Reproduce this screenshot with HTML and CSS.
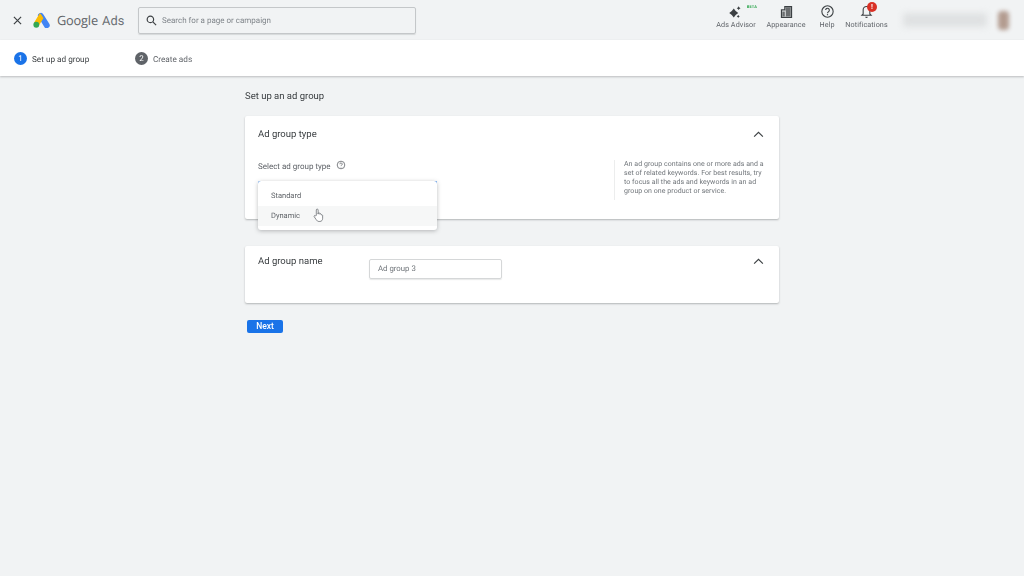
FILE: index.html
```html
<!DOCTYPE html>
<html lang="en">
<head>
<meta charset="utf-8">
<title>Google Ads</title>
<link rel="stylesheet" href="styles.css">
</head>
<body>
<div class="page">
<header class="topbar">
  <svg class="close" viewBox="0 0 10 10"><path d="M1 1l8 8M9 1l-8 8"/></svg>
  <svg class="logo" viewBox="0 0 20 18"><path d="M7 1.500a3.400 3.400 0 0 1 4.600 1.200l6.600 10.600a3.300 3.300 0 0 1-5.700 3.400L6 6a3.200 3.200 0 0 1 1-4.500z" fill="#4285f4"/><path d="M7.500 1.300L1 12l5.500 3.200L11.600 7 9.800 3.800C9.200 2.700 8.400 1.900 7.500 1.300z" fill="#fbbc04"/><circle cx="3.600" cy="14.300" r="3.300" fill="#34a853"/></svg>
  <div class="brand"><span class="brand-google">Google</span> <span class="brand-ads">Ads</span></div>
  <div class="search">
    <svg class="search-icon" viewBox="0 0 12 12"><circle cx="4.800" cy="4.800" r="3.500"/><path d="M7.500 7.500L11 11"/></svg>
    <span>Search for a page or campaign</span>
  </div>
  <nav class="tools">
    <div class="tool tool-advisor">
      <svg class="tool-icon" viewBox="0 0 24 18"><path d="M9 5l2.600 3.400L15 11l-3.400 2.600L9 17l-2.600-3.400L3 11l3.400-2.600z" fill="#3c4043"/><path d="M15.500 2l1 1.500 1.500 1-1.500 1-1 1.500-1-1.500-1.500-1 1.500-1z" fill="#3c4043"/><path d="M15 13.500l.8 1.200 1.200.8-1.200.8-.8 1.200-.8-1.200-1.200-.8 1.200-.8z" fill="#3c4043"/></svg>
      <span class="beta">BETA</span>
      <span>Ads Advisor</span>
    </div>
    <div class="tool tool-appearance">
      <svg class="tool-icon" viewBox="0 0 18 18"><path d="M3 7h4V3h8v13H3z" fill="none" stroke="#3c4043" stroke-width="1.500"/><path d="M8 4h6v11H8zM4 9h3v6H4z" fill="#3c4043" opacity=".75"/></svg>
      <span>Appearance</span>
    </div>
    <div class="tool tool-help">
      <svg class="tool-icon" viewBox="0 0 18 18"><circle cx="9" cy="9" r="6.800" fill="none" stroke="#3c4043" stroke-width="1.300"/><path d="M6.800 7.300a2.200 2.200 0 1 1 3.500 1.800c-.8.600-1.300 1-1.300 2" fill="none" stroke="#3c4043" stroke-width="1.300"/><circle cx="9" cy="12.800" r=".8" fill="#3c4043"/></svg>
      <span>Help</span>
    </div>
    <div class="tool tool-notify">
      <svg class="tool-icon" viewBox="0 0 18 18"><path d="M9 3a4 4 0 0 1 4 4v5l1.500 1.500h-11L5 12V7a4 4 0 0 1 4-4z" fill="none" stroke="#3c4043" stroke-width="1.300"/><path d="M7.500 15.300h3a1.500 1.500 0 0 1-3 0z" fill="#3c4043"/></svg>
      <span class="alert">!</span>
      <span>Notifications</span>
    </div>
  </nav>
  <div class="account">
    <div class="account-lines"></div>
    <div class="account-photo"></div>
  </div>
</header>

<div class="steps">
  <div class="step step-active"><span class="step-num">1</span><span class="step-text">Set up ad group</span></div>
  <div class="step"><span class="step-num">2</span><span class="step-text">Create ads</span></div>
</div>

<main class="content">
  <h1 class="page-title">Set up an ad group</h1>

  <section class="card card-type">
    <div class="card-head">
      <h2>Ad group type</h2>
      <svg class="chevron" viewBox="0 0 12 8"><path d="M1 6.500l5-5 5 5"/></svg>
    </div>
    <div class="type-body">
      <div class="type-left">
        <div class="type-label">Select ad group type
          <svg class="hint" viewBox="0 0 10 10"><circle cx="5" cy="5" r="3.800"/><path d="M3.800 4.200a1.200 1.200 0 1 1 1.800 1c-.4.300-.6.500-.6.900M5 7v.4"/></svg>
        </div>
        <div class="select-top"></div>
        <div class="menu">
          <div class="menu-item">Standard</div>
          <div class="menu-item menu-item-hover">Dynamic
            <svg class="cursor" viewBox="0 0 12 16"><path d="M3.600 8V2a1 1 0 0 1 2 0v4.500V5.600a1 1 0 0 1 1.800 0v1a1 1 0 0 1 1.600.2v.7a.9.9 0 0 1 1.500.5v3c0 2-1 3.500-3 3.500H6.500c-1.500 0-2.200-.8-3-2L1.300 9.300c-.5-1 .7-1.800 1.500-1z" fill="#fff" stroke="#5f6368" stroke-width=".8"/></svg>
          </div>
        </div>
      </div>
      <p class="type-help">An ad group contains one or more ads and a set of related keywords. For best results, try to focus all the ads and keywords in an ad group on one product or service.</p>
    </div>
  </section>

  <section class="card card-name">
    <h2>Ad group name</h2>
    <div class="name-input">Ad group 3</div>
    <svg class="chevron" viewBox="0 0 12 8"><path d="M1 6.500l5-5 5 5"/></svg>
  </section>

  <button class="next" type="button">Next</button>
</main>
</div>
</body>
</html>
```
FILE: styles.css
```css
* { box-sizing: border-box; }
html, body { margin: 0; height: 100%; }
body {
  width: 1024px;
  height: 576px;
  overflow: hidden;
  background: #f1f3f4;
  font-family: Roboto, "Liberation Sans", sans-serif;
  color: #3c4043;
  text-rendering: geometricPrecision;
}
.page { height: 576px; filter: blur(.35px); }

.topbar {
  height: 40px;
  display: flex;
  align-items: center;
  background: #f1f3f4;
  padding-left: 13px;
}
.close { width: 9px; height: 9px; flex: none; }
.close path { stroke: #3c4043; stroke-width: 1.300; fill: none; }
.logo { width: 18px; height: 16px; margin-left: 11px; flex: none; }
.brand { margin-left: 6px; width: 70px; font-size: 12.800px; white-space: nowrap; color: #5f6368; }
.brand-google { font-family: "Open Sans", sans-serif; letter-spacing: -.2px; }
.brand-ads { margin-left: 1px; color: #6b7074; }
.search {
  width: 278px;
  height: 27px;
  margin-left: 11px;
  display: flex;
  align-items: center;
  gap: 5px;
  padding-left: 7px;
  border: 1px solid #c4c7c9;
  border-radius: 2px;
  box-shadow: 0 1px 1px rgba(60,64,67,.15);
  font-size: 8px;
  color: #80868b;
}
.search-icon { width: 11px; height: 11px; flex: none; }
.search-icon circle, .search-icon path { fill: none; stroke: #3c4043; stroke-width: 1.300; }

.tools { display: flex; align-self: flex-start; padding-top: 4px; margin-left: 300px; }
.tool {
  position: relative;
  display: flex;
  flex-direction: column;
  align-items: center;
  font-size: 7.200px;
  letter-spacing: .1px;
  color: #5f6368;
  white-space: nowrap;
}
.tool-icon { width: 15px; height: 15px; margin-bottom: 1px; }
.tool-advisor { width: 40px; }
.tool-advisor .tool-icon { width: 18px; }
.tool-appearance { width: 38px; margin-left: 11px; }
.tool-help { width: 16px; margin-left: 14px; }
.tool-notify { width: 41px; margin-left: 11px; }
.beta {
  position: absolute;
  top: 0;
  right: -1px;
  font-size: 4px;
  font-weight: 700;
  color: #34a853;
}
.alert {
  position: absolute;
  top: -2px;
  left: 21px;
  width: 10px;
  height: 10px;
  border-radius: 50%;
  background: #d93025;
  color: #fff;
  font-size: 7px;
  font-weight: 700;
  line-height: 10px;
  text-align: center;
}
.account { display: flex; align-items: center; margin-left: 16px; gap: 11px; }
.account-lines {
  width: 84px;
  height: 14px;
  background: #dfe1e2;
  border-radius: 3px;
  filter: blur(3px);
}
.account-photo {
  width: 11px;
  height: 19px;
  background: #b39c90;
  border-radius: 4px;
  filter: blur(2px);
}

.steps {
  height: 36px;
  display: flex;
  align-items: center;
  padding-left: 14px;
  background: #fff;
  box-shadow: 0 1px 2px rgba(60,64,67,.3);
  font-size: 8.200px;
}
.step { display: flex; align-items: center; gap: 5px; color: #5f6368; }
.step-active { width: 121px; color: #3c4043; }
.step-text { padding-top: 3px; }
.step-num {
  width: 13px;
  height: 13px;
  border-radius: 50%;
  background: #5f6368;
  color: #fff;
  font-size: 8px;
  line-height: 13px;
  text-align: center;
}
.step-active .step-num { background: #1a73e8; }

.content { width: 534px; margin-left: 245px; }
.page-title {
  margin: 15px 0 13px;
  height: 12px;
  font-size: 9.500px;
  line-height: 12px;
  font-weight: 400;
  color: #3c4043;
}
.card {
  background: #fff;
  border-radius: 2px;
  box-shadow: 0 1px 2px rgba(60,64,67,.35);
}
.card h2 { margin: 0; padding-top: 2px; font-size: 9.500px; line-height: 12px; font-weight: 400; color: #3c4043; }
.chevron { width: 11px; height: 7px; flex: none; }
.chevron path { fill: none; stroke: #3c4043; stroke-width: 1.300; }

.card-type { height: 103px; padding: 12px 15px 0 13px; }
.card-head { display: flex; justify-content: space-between; align-items: center; height: 12px; }
.type-body { display: flex; justify-content: space-between; margin-top: 20px; }
.type-left { position: relative; width: 179px; }
.type-label {
  display: flex;
  align-items: center;
  gap: 5px;
  height: 11px;
  padding-top: 1px;
  font-size: 8px;
  color: #5f6368;
}
.hint { width: 10px; height: 10px; margin-top: -3px; }
.hint circle, .hint path { fill: none; stroke: #5f6368; stroke-width: .8; }
.select-top {
  height: 5px;
  margin-top: 10px;
  border: 1px solid #1a73e8;
  border-bottom: 0;
  border-radius: 2px 2px 0 0;
}
.menu {
  position: absolute;
  top: 21px;
  left: 0;
  width: 179px;
  height: 49px;
  padding-top: 5px;
  background: #fff;
  border-radius: 3px;
  box-shadow: 0 1px 4px rgba(60,64,67,.35);
}
.menu-item {
  position: relative;
  height: 20px;
  padding-left: 13px;
  font-size: 7.500px;
  line-height: 20px;
  color: #5f6368;
}
.menu-item-hover { background: #f6f7f7; }
.cursor { position: absolute; left: 55px; top: 2px; width: 11px; height: 15px; }
.type-help {
  width: 150px;
  height: 40px;
  margin: 0;
  padding: 0 0 0 9px;
  border-left: 1px solid #eceded;
  font-size: 7px;
  line-height: 9px;
  letter-spacing: .05px;
  color: #70757a;
}

.card-name {
  position: relative;
  display: flex;
  align-items: flex-start;
  height: 57px;
  margin-top: 27px;
  padding: 8px 15px 0 13px;
}
.card-name h2 { width: 111px; }
.name-input {
  width: 133px;
  height: 20px;
  margin-top: 5px;
  padding-left: 8px;
  border: 1px solid #d5d7d8;
  border-radius: 2px;
  box-shadow: 0 1px 1px rgba(60,64,67,.12);
  font-size: 7.800px;
  line-height: 18px;
  color: #70757a;
}
.card-name .chevron { margin-left: auto; margin-top: 4px; }

.next {
  display: block;
  width: 36px;
  height: 13px;
  margin: 17px 0 0 2px;
  padding: 0;
  border: 0;
  border-radius: 2px;
  background: #1a73e8;
  color: #fff;
  font: 500 8.500px/13px Roboto, "Liberation Sans", sans-serif;
}
```
